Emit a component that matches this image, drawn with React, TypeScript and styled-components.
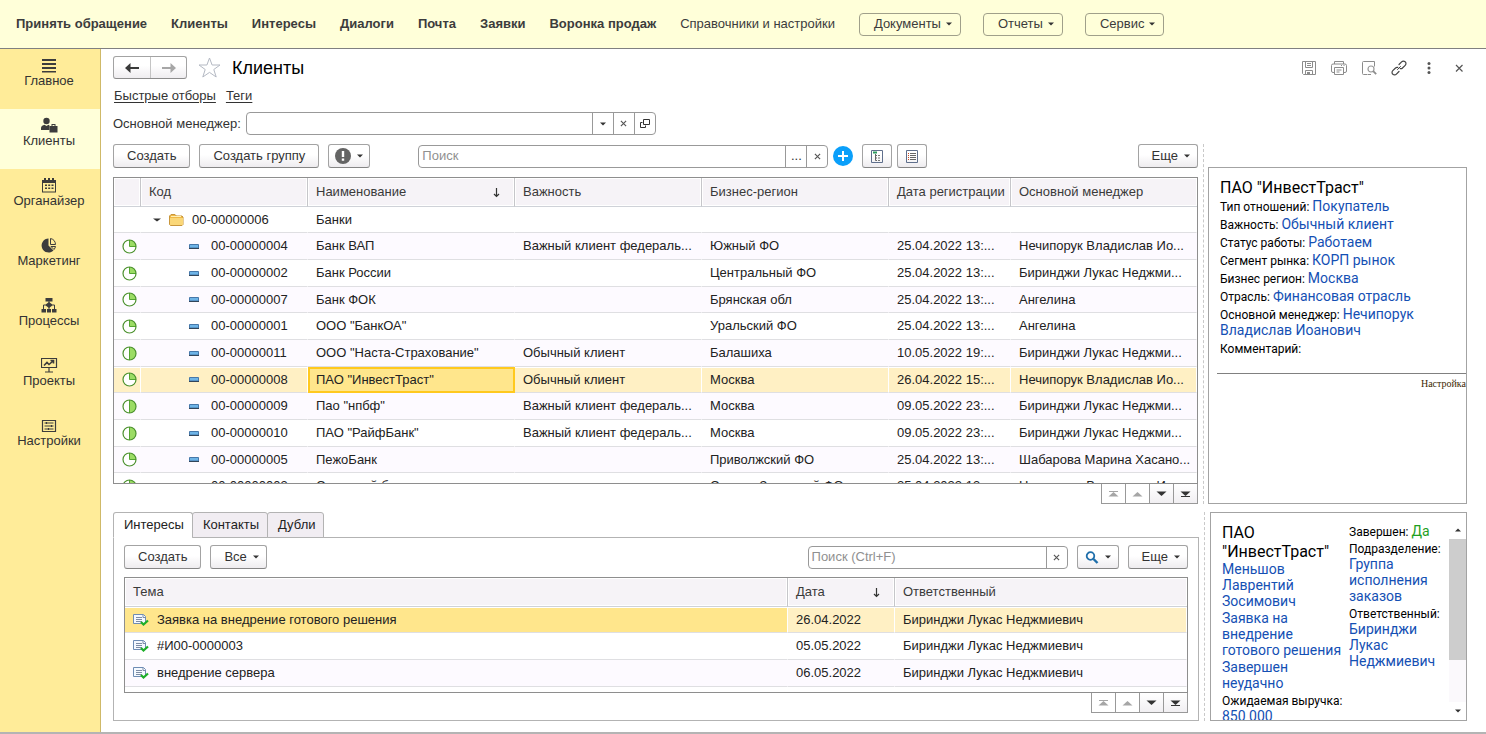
import React from 'react';
import styled, { createGlobalStyle, css } from 'styled-components';

const GlobalStyle = createGlobalStyle`
  * { box-sizing: border-box; }
  body {
    margin: 0;
    background: #fff;
    color: #333;
    font: 13px/16px "Liberation Sans", Arial, sans-serif;
  }
  button, input { font: inherit; color: inherit; }
  button { cursor: pointer; }
  svg { display: block; flex: none; }
`;

const line = '#a3a3a3';

/* ---------- shell ---------- */

const Shell = styled.div`
  display: flex;
  flex-direction: column;
  height: 100vh;
  min-height: 640px;
`;

const TopBar = styled.nav`
  display: flex;
  align-items: center;
  gap: 24px;
  height: 49px;
  padding: 0 16px;
  background: #ffffd9;
  border-bottom: 1px solid #808080;
  white-space: nowrap;
  flex: none;
`;

const TopLink = styled.a<{ $strong?: boolean }>`
  color: #3c3c3c;
  text-decoration: none;
  font-weight: ${(p) => (p.$strong ? 700 : 400)};
`;

const TopMenus = styled.div`
  display: flex;
  gap: 22px;
`;

const TopMenu = styled.button`
  display: flex;
  align-items: center;
  gap: 5px;
  height: 23px;
  padding: 0 8px 0 14px;
  border: 1px solid #a0a08a;
  border-radius: 4px;
  background: transparent;
  color: #3c3c3c;
`;

const Body = styled.div`
  display: flex;
  flex: 1;
  min-height: 0;
`;

const Sidebar = styled.nav`
  flex: none;
  width: 101px;
  background: #ffec99;
  border-right: 1px solid #cfb968;
`;

const SideItem = styled.a<{ $active?: boolean }>`
  display: flex;
  flex-direction: column;
  align-items: center;
  height: 60px;
  padding: 8px 2px 0 0;
  color: #333;
  text-decoration: none;
  background: ${(p) => (p.$active ? '#ffffd9' : 'transparent')};
`;

const Main = styled.main`
  display: flex;
  flex-direction: column;
  flex: 1;
  min-width: 0;
  padding: 7px 19px 11px 12px;
`;

const StatusLine = styled.div`
  flex: none;
  height: 2px;
  background: #b4b4b4;
`;

/* ---------- title rows ---------- */

const TitleRow = styled.header`
  display: flex;
  align-items: center;
  height: 23px;
  gap: 11px;
`;

const NavPair = styled.div`
  display: flex;
  height: 23px;
  border: 1px solid ${line};
  border-bottom-color: #8c8c8c;
  border-radius: 3px;
  background: linear-gradient(#fff 40%, #efedf0);
`;

const NavButton = styled.button`
  display: grid;
  place-items: center;
  width: 36px;
  padding: 0;
  border: 0;
  background: none;
  & + & { border-left: 1px solid #c4c4c4; }
`;

const IconButton = styled.button`
  display: grid;
  place-items: center;
  padding: 0;
  border: 0;
  background: none;
`;

const Title = styled.h1`
  margin: 0;
  color: #000;
  font-size: 18px;
  line-height: 22px;
  font-weight: 400;
`;

const TitleTools = styled.div`
  display: flex;
  gap: 14px;
  margin-left: auto;
`;

const QuickLinks = styled.div`
  display: flex;
  gap: 10px;
  padding: 0 1px;
  margin-top: 9px;
`;

const QuickLink = styled.a`
  color: #333;
  text-underline-offset: 2px;
`;

const FilterRow = styled.div`
  display: flex;
  align-items: center;
  gap: 5px;
  margin-top: 8px;
`;

/* ---------- controls ---------- */

const Field = styled.div<{ $width: number }>`
  display: flex;
  flex: none;
  width: ${(p) => p.$width}px;
  height: 23px;
  border: 1px solid #999;
  border-radius: 4px;
  background: #fff;
  overflow: hidden;
`;

const FieldInput = styled.input`
  flex: 1;
  min-width: 0;
  padding: 0 3px;
  border: 0;
  outline: 0;
  background: none;
  &::placeholder { color: #909090; opacity: 1; }
`;

const FieldButton = styled.button`
  display: grid;
  place-items: center;
  width: 21px;
  padding: 0;
  border: 0;
  border-left: 1px solid #999;
  background: none;
`;

const Toolbar = styled.div`
  display: flex;
  align-items: center;
  gap: 9px;
  height: 24px;
`;

const Group = styled.div`
  display: flex;
  align-items: center;
  gap: 5px;
`;

const Spacer = styled.div<{ $width?: number }>`
  ${(p) => (p.$width ? css`width: ${p.$width}px;` : css`flex: 1;`)}
`;

const Button = styled.button<{ $kind?: 'menu' | 'icon' | 'iconMenu' }>`
  display: flex;
  align-items: center;
  justify-content: center;
  gap: 6px;
  height: 24px;
  padding: ${(p) => (p.$kind === 'menu' ? '0 7px 0 13px' : p.$kind ? '0' : '0 13px')};
  ${(p) => p.$kind === 'icon' && css`width: 30px;`}
  ${(p) => p.$kind === 'iconMenu' && css`width: 42px;`}
  border: 1px solid ${line};
  border-bottom-color: #858585;
  border-radius: 3px;
  background: linear-gradient(#fff 45%, #eeecef);
  white-space: nowrap;
`;

/* ---------- tables ---------- */

const TopArea = styled.section`
  display: grid;
  grid-template-columns: minmax(0, 1fr) 10px 259px;
  flex: 1;
  min-height: 0;
  margin-top: 9px;
`;

const BottomArea = styled.section`
  display: grid;
  grid-template-columns: minmax(0, 1fr) 11px 257px;
  height: 209px;
  margin-top: 8px;
  flex: none;
`;

const Splitter = styled.div`
  justify-self: center;
  border-left: 1px dashed #c9c9c9;
`;

const ListColumn = styled.div`
  display: flex;
  flex-direction: column;
  min-height: 0;
`;

const TableFrame = styled.div<{ $tight?: boolean }>`
  flex: 1;
  min-height: 0;
  margin-top: ${(p) => (p.$tight ? 8 : 9)}px;
  border: 1px solid #8e8e8e;
  overflow: hidden;
`;

const Table = styled.table`
  width: 100%;
  table-layout: fixed;
  border-collapse: separate;
  border-spacing: 0;
  color: #222;
`;

const Th = styled.th`
  height: 29px;
  padding: 0 8px;
  border-right: 1px solid #c6c6ca;
  border-bottom: 1px solid #cfd2d8;
  background: #f6f3f7;
  box-shadow: inset 0 0 0 1px #fff;
  color: #3a3a3a;
  font-weight: 400;
  text-align: left;
  white-space: nowrap;
  &:last-child { border-right: 0; }
`;

const Sorted = styled.span`
  display: flex;
  align-items: center;
  justify-content: space-between;
  padding-right: 5px;
`;

const Tr = styled.tr<{ $selected?: boolean; $tinted?: boolean }>`
  height: 27px;
  background: ${(p) => (p.$selected ? '#fff0c4' : p.$tinted ? '#fdfaff' : '#fff')};
  &:nth-child(3n + 1) { height: 26px; }
  ${(p) =>
    p.$selected &&
    css`
      && > td { border-right: 1px solid #fff; box-shadow: inset 0 1px #fff; }
    `}
`;

const Td = styled.td<{ $current?: boolean; $fill?: boolean }>`
  padding: 0 8px;
  border-right: 1px solid transparent;
  border-bottom: 1px solid #dfdfe2;
  white-space: nowrap;
  overflow: hidden;
  ${(p) =>
    p.$current &&
    css`
      background: #ffe68c;
      outline: 2px solid #ffc91f;
      outline-offset: -2px;
    `}
  ${(p) => p.$fill && css`background: #ffe68c;`}
`;

const Inline = styled.span<{ $indent?: number; $gap: number }>`
  display: flex;
  align-items: center;
  gap: ${(p) => p.$gap}px;
  padding-left: ${(p) => p.$indent ?? 0}px;
`;

const Pager = styled.div`
  display: flex;
  flex: none;
  align-self: flex-end;
  border: 1px solid #999;
  border-top: 0;
`;

const PagerButton = styled.button`
  display: grid;
  place-items: center;
  width: 24px;
  height: 19px;
  padding: 0;
  border: 0;
  background: #fff;
  color: #333;
  & + & { border-left: 1px solid #999; }
  &:disabled { color: #a6a6a6; }
  &:not(:disabled) { background: linear-gradient(#fff, #f1eff2); }
  &:first-child { width: 23px; }
`;

/* ---------- tabs ---------- */

const Tabs = styled.div`
  display: flex;
  flex: none;
  height: 26px;
  margin-bottom: -1px;
  z-index: 1;
`;

const Tab = styled.button<{ $active?: boolean }>`
  padding: 0 8px 0 10px;
  border: 1px solid #b3b3b3;
  border-bottom-color: ${(p) => (p.$active ? '#fff' : '#b3b3b3')};
  border-radius: 3px 3px 0 0;
  background: ${(p) => (p.$active ? '#fff' : '#f1edf2')};
  color: #222;
  & + & { margin-left: -1px; }
`;

const TabPanel = styled.div`
  display: flex;
  flex-direction: column;
  flex: 1;
  min-height: 0;
  padding: 7px 10px;
  border: 1px solid #b3b3b3;
`;

/* ---------- info cards ---------- */

const Line = styled.p`
  margin: 2px 0 0;
`;

const Card = styled.aside<{ $lowered?: boolean }>`
  display: flex;
  margin-top: ${(p) => (p.$lowered ? 23 : 0)}px;
  border: 1px solid ${line};
  overflow: hidden;
  color: #000;
  font: 12px/16px Roboto, sans-serif;
`;

const CardMain = styled.div`
  flex: 1;
  min-width: 0;
  padding: 10px 0 0 8px;
`;

const CardText = styled.div`
  padding: 0 40px 16px 3px;
`;

const CardTitle = styled.h2`
  margin: 0;
  font-size: 16px;
  line-height: 19px;
  font-weight: 400;
`;

const Value = styled.a<{ $good?: boolean }>`
  color: ${(p) => (p.$good ? '#1ea01e' : '#1450b4')};
  font-size: 14px;
  line-height: 14px;
  text-decoration: none;
`;

const CardFooter = styled.div`
  padding-top: 4px;
  border-top: 1px solid #808080;
  text-align: right;
  font: 10px/12px "Liberation Serif", serif;
`;

const FooterLink = styled.a`
  color: #3c2800;
  text-decoration: none;
`;

const CardColumns = styled.div`
  display: grid;
  grid-template-columns: 127px minmax(0, 1fr);
  flex: 1;
  padding: 10px 0 0 11px;
  ${Line} { margin-top: 1px; }
`;

const Scrollbar = styled.div`
  display: flex;
  flex-direction: column;
  width: 17px;
  padding-top: 8px;
`;

const ScrollArrow = styled.button`
  display: grid;
  place-items: center;
  height: 18px;
  padding: 0;
  border: 0;
  background: none;
`;

const ScrollTrack = styled.div`
  flex: 1;
  background: #fbf9fc;
`;

const ScrollThumb = styled.div`
  height: 74%;
  background: #cdcdcd;
`;

/* ---------- icons ---------- */

const Caret = ({ up, wide }: { up?: boolean; wide?: boolean }) => (
  <svg width={wide ? 8 : 6} height="4" viewBox="0 0 6 4" preserveAspectRatio="none">
    <path d={up ? 'M0 3.5 3 .5l3 3z' : 'M0 .5h6l-3 3z'} fill="#333" />
  </svg>
);

const Cross = () => (
  <svg width="7" height="7" viewBox="0 0 8 8">
    <path d="M1 1l6 6M7 1 1 7" stroke="#555" strokeWidth="1.3" />
  </svg>
);

const SortArrow = () => (
  <svg width="9" height="11" viewBox="0 0 9 11">
    <path d="M4.500 1v8.500M2 7l2.500 2.500L7 7" stroke="#333" strokeWidth="1.2" fill="none" />
  </svg>
);

const Arrow = ({ right }: { right?: boolean }) => (
  <svg width="14" height="10" viewBox="0 0 14 10" fill={right ? '#a6a6a6' : '#3a3a3a'}>
    <path d={right ? 'M0 4h8.500V0L14 5l-5.500 5V6H0z' : 'M14 4H5.500V0L0 5l5.500 5V6H14z'} />
  </svg>
);

const Star = () => (
  <svg width="23" height="21" viewBox="0 0 23 21">
    <path d="M11.500 1l2.600 7H22l-6.200 4.500L18.200 20l-6.700-4.600L4.800 20l2.400-7.500L1 8h7.900z" fill="#fff" stroke="#b4b9c3" />
  </svg>
);

const stroke = (color: string) => ({ fill: 'none', stroke: color, strokeWidth: 1 });

const SaveIcon = () => (
  <svg width="16" height="16" viewBox="0 0 16 16" {...stroke('#8c8c8c')}>
    <path d="M1.500 1.500h13v13h-12l-1-1zM4.500 1.500v6h7v-6M6 3.500h4M6 5.500h4M4.500 14.500v-4h7v4" />
    <path d="M6 12h3v2.500H6z" fill="#8c8c8c" stroke="none" />
  </svg>
);

const PrintIcon = () => (
  <svg width="16" height="16" viewBox="0 0 16 16" {...stroke('#8c8c8c')}>
    <path d="M3.500 4V1.500h9V4M3.500 12.500H2a1.500 1.500 0 0 1-1.500-1.500V5.500A1.500 1.500 0 0 1 2 4h12a1.500 1.500 0 0 1 1.500 1.500V11a1.500 1.500 0 0 1-1.500 1.500h-1.500M3.500 7.500h9v7h-9zM5.500 10h5M5.500 12h3M10 5.500h1M12.500 5.500h1" />
  </svg>
);

const PreviewIcon = () => (
  <svg width="16" height="16" viewBox="0 0 16 16" {...stroke('#8c8c8c')}>
    <path d="M6.500 14.500h-4a1 1 0 0 1-1-1v-11a1 1 0 0 1 1-1h11v5M7 14.500h3" />
    <circle cx="10" cy="9" r="3" stroke="#999" strokeWidth="1.200" />
    <path d="M12.200 11.200l3 3" strokeWidth="1.800" />
  </svg>
);

const LinkIcon = () => (
  <svg width="16" height="16" viewBox="0 0 16 16" fill="none" stroke="#444" strokeWidth="1.200" strokeLinecap="round">
    <path d="M8 4.500l2.600-2.700a2.500 2.500 0 0 1 3.600 0 2.500 2.500 0 0 1 0 3.600L11.500 8a2.300 2.300 0 0 1-2.300.6" />
    <path d="M8 11.500l-2.600 2.700a2.500 2.500 0 0 1-3.600 0 2.500 2.500 0 0 1 0-3.600L4.500 8a2.300 2.300 0 0 1 2.300-.6" />
    <path d="M6.500 9.500l3-3" strokeWidth="1" />
  </svg>
);

const DotsIcon = () => (
  <svg width="16" height="16" viewBox="0 0 16 16" fill="#555">
    <circle cx="8" cy="3.500" r="1.500" />
    <circle cx="8" cy="8" r="1.500" />
    <circle cx="8" cy="12.500" r="1.500" />
  </svg>
);

const CloseIcon = () => (
  <svg width="16" height="16" viewBox="0 0 16 16">
    <path d="M5 5l6.500 6.500M11.500 5L5 11.500" stroke="#555" strokeWidth="1.200" />
  </svg>
);

const OpenIcon = () => (
  <svg width="10" height="9" viewBox="0 0 10 9" {...stroke('#333')}>
    <path d="M3.500.5h6v5h-6zM2.500 3.500h-2v5h5v-2" />
  </svg>
);

const AlertIcon = () => (
  <svg width="16" height="16" viewBox="0 0 16 16">
    <circle cx="8" cy="8" r="8" fill="#646464" />
    <path d="M6.800 3h2.400v6H6.800zM6.800 10.500h2.400v2.200H6.800z" fill="#fff" />
  </svg>
);

const PlusIcon = () => (
  <svg width="20" height="20" viewBox="0 0 20 20">
    <circle cx="10" cy="10" r="10" fill="#0a9ffa" />
    <path d="M10 5v10M5 10h10" stroke="#fff" strokeWidth="2" />
  </svg>
);

const TreeViewIcon = () => (
  <svg width="12" height="13" viewBox="0 0 12 13" {...stroke('#5f6f8c')}>
    <path d="M.5.500h11v12H.5z" />
    <path d="M2 2.500h4" stroke="#2d9b5f" strokeWidth="2" />
    <path d="M4.500 4v6.500H6M4.500 5.500H6M4.500 8H6" stroke="#666" />
    <path d="M7 5.500h3M7 8h3M7 10.500h3" stroke="#777" strokeDasharray="2 1" />
  </svg>
);

const ListViewIcon = () => (
  <svg width="12" height="13" viewBox="0 0 12 13" {...stroke('#5f6f8c')}>
    <path d="M.5.500h11v12H.5z" />
    <path d="M2 3.500h1M2 5.500h1M2 7.500h1M2 9.500h1" stroke="#c8461e" />
    <path d="M4 3.500h6M4 5.500h6M4 7.500h6M4 9.500h6" stroke="#666" />
  </svg>
);

const SearchIcon = () => (
  <svg width="14" height="13" viewBox="0 0 14 13" fill="none" stroke="#1e6eaa">
    <circle cx="5.500" cy="5" r="3.800" strokeWidth="1.800" />
    <path d="M8.500 8l4 4" strokeWidth="2.400" />
  </svg>
);

const Pie = ({ half }: { half?: boolean }) => (
  <svg width="15" height="15" viewBox="0 0 15 15">
    <circle cx="7.500" cy="7.500" r="6.500" fill="#fff" />
    <path d={half ? 'M7.500 1a6.500 6.500 0 0 1 0 13z' : 'M7.500 1A6.500 6.500 0 0 1 14 7.500H7.500z'} fill="#9bdc64" />
    <path d={half ? 'M7.500 1v13' : 'M7.500 1v6.500H14'} stroke="#55a532" fill="none" />
    <circle cx="7.500" cy="7.500" r="6.500" fill="none" stroke="#4b912d" strokeWidth="1.200" />
  </svg>
);

const Dash = () => (
  <svg width="10" height="5" viewBox="0 0 10 5">
    <path d="M.5.500h9v3.500h-9z" fill="#6eb4e6" stroke="#4678aa" />
    <path d="M0 4.500h10" stroke="#32465a" />
  </svg>
);

const Folder = () => (
  <svg width="15" height="12" viewBox="0 0 15 12">
    <path d="M.5 10.500V2L2 .5h4L7.500 2H13l1 1v7.500l-1 1H1.500z" fill="#f0b946" stroke="#c8963c" />
    <path d="M1 4h13v6.500l-.5.500h-12L1 10.500z" fill="#fad778" />
    <path d="M2 2.500h10" stroke="#fff0b4" />
  </svg>
);

const DocIcon = () => (
  <svg width="16" height="12" viewBox="0 0 16 12">
    <path d="M.5.500h10l2 2V9.500H.5z" fill="#f5f9ff" stroke="#6e8cb4" />
    <path d="M3 3.500h6M3 5.500h6M3 7.500h6M10 1v2.500h2.500" stroke="#7d8ca5" fill="none" />
    <path d="M8 8l2.500 2.500L15 6.500" stroke="#1eaf28" strokeWidth="2.200" fill="none" />
  </svg>
);

const PageMark = ({ up, end }: { up?: boolean; end?: boolean }) => (
  <svg width="11" height="8" viewBox="0 0 11 8" fill="currentColor">
    <path d={up ? 'M.5 6.500 5.500 2l5 4.500z' : 'M.5 1.500h10L5.500 6z'} />
    {end && <path d={up ? 'M1 1h9v1H1z' : 'M1 6h9v1H1z'} />}
  </svg>
);

const dark = '#3c3c3c';
const sideIcons: Record<string, React.ReactNode> = {
  main: <path d="M1 2h14v2H1zM1 6h14v2H1zM1 10h14v2H1zM1 14h14v1.500H1z" />,
  clients: (
    <>
      <circle cx="5.500" cy="4" r="3.200" />
      <path d="M0 13V11c0-2 2-2.500 3.500-3.200L5.500 9l2-1.200 1 .6V13z" />
      <path d="M8.500 9h8v6.500h-8zM10.500 9V7h4v2h-1V8h-2v1z" />
    </>
  ),
  calendar: (
    <>
      <path d="M1 3h14v12.500H1zM2 6v8.500h12V6z" fillRule="evenodd" />
      <path d="M3 1h2v3H3zM7 1h2v3H7zM11 1h2v3h-2zM4 7.500h2v1.500H4zM7.200 7.500h2v1.500h-2zM10.500 7.500h2v1.500h-2zM4 10.500h2V12H4zM7.200 10.500h2V12h-2zM10.500 10.500h2V12h-2z" />
    </>
  ),
  pie: (
    <>
      <path d="M7.500 1.500v7l5 5A7 7 0 1 1 7.500 1.500z" />
      <path d="M9.500 7.500v-6a6.500 6.500 0 0 1 5 6zM10 9.500h4.500a7 7 0 0 1-1.500 3z" fill="none" stroke={dark} />
    </>
  ),
  flow: (
    <>
      <path d="M4.500 1h7v3.500h-7zM8 5l4 3-4 3-4-3zM.5 12h4.500v3.500H.5zM6 12h4v3.500H6zM11 12h4.500v3.500H11z" />
      <path d="M8 4v8M4.500 8H2.500v4M11.500 8h2v4" fill="none" stroke={dark} />
    </>
  ),
  board: (
    <>
      <path d="M.5 1.500h15v9H.5zM8 10.500V15M4 15h8" fill="none" stroke={dark} strokeWidth="1.200" />
      <path d="M3 8.500l3-3 2 2L12 4M9.500 3.500h3v3" fill="none" stroke={dark} strokeWidth="1.600" />
    </>
  ),
  settings: (
    <path
      d="M1.500 3.500h13v11h-13zM3.500 6h9M3.500 9h9M3.500 12h9M5.500 5v2M10.500 8v2M7.500 11v2"
      fill="none"
      stroke={dark}
      strokeWidth="1.200"
    />
  ),
};

/* ---------- data ---------- */

const topLinks = ['Принять обращение', 'Клиенты', 'Интересы', 'Диалоги', 'Почта', 'Заявки', 'Воронка продаж'];
const topMenus = ['Документы', 'Отчеты', 'Сервис'];

const sideItems = [
  ['main', 'Главное'],
  ['clients', 'Клиенты'],
  ['calendar', 'Органайзер'],
  ['pie', 'Маркетинг'],
  ['flow', 'Процессы'],
  ['board', 'Проекты'],
  ['settings', 'Настройки'],
];

const federal = 'Важный клиент федераль...';
const regular = 'Обычный клиент';
const nechiporuk = 'Нечипорук Владислав Ио...';
const birindzhi = 'Биринджи Лукас Неджми...';

type Client = { code: string; name: string; level?: string; region: string; date: string; manager: string; half?: boolean };

const clients: Client[] = [
  { code: '00-00000004', name: 'Банк ВАП', level: federal, region: 'Южный ФО', date: '25.04.2022 13:...', manager: nechiporuk },
  { code: '00-00000002', name: 'Банк России', region: 'Центральный ФО', date: '25.04.2022 13:...', manager: birindzhi },
  { code: '00-00000007', name: 'Банк ФОК', region: 'Брянская обл', date: '25.04.2022 13:...', manager: 'Ангелина' },
  { code: '00-00000001', name: 'ООО "БанкОА"', region: 'Уральский ФО', date: '25.04.2022 13:...', manager: 'Ангелина' },
  { code: '00-00000011', name: 'ООО "Наста-Страхование"', level: regular, region: 'Балашиха', date: '10.05.2022 19:...', manager: birindzhi, half: true },
  { code: '00-00000008', name: 'ПАО "ИнвестТраст"', level: regular, region: 'Москва', date: '26.04.2022 15:...', manager: nechiporuk },
  { code: '00-00000009', name: 'Пао "нпбф"', level: federal, region: 'Москва', date: '09.05.2022 23:...', manager: birindzhi, half: true },
  { code: '00-00000010', name: 'ПАО "РайфБанк"', level: federal, region: 'Москва', date: '09.05.2022 23:...', manager: birindzhi, half: true },
  { code: '00-00000005', name: 'ПежоБанк', region: 'Приволжский ФО', date: '25.04.2022 13:...', manager: 'Шабарова Марина Хасано...' },
  { code: '00-00000003', name: 'Северный банк', region: 'Северо-Западный ФО', date: '25.04.2022 13:...', manager: nechiporuk, half: true },
];

const interests = [
  ['Заявка на внедрение готового решения', '26.04.2022'],
  ['#И00-0000003', '05.05.2022'],
  ['внедрение сервера', '06.05.2022'],
];

const facts = [
  ['Тип отношений:', 'Покупатель'],
  ['Важность:', 'Обычный клиент'],
  ['Статус работы:', 'Работаем'],
  ['Сегмент рынка:', 'КОРП рынок'],
  ['Бизнес регион:', 'Москва'],
  ['Отрасль:', 'Финансовая отрасль'],
  ['Основной менеджер:', 'Нечипорук Владислав Иоанович'],
];

const PageControls = () => (
  <Pager>
    <PagerButton disabled aria-label="В начало"><PageMark up end /></PagerButton>
    <PagerButton disabled aria-label="Вверх"><PageMark up /></PagerButton>
    <PagerButton aria-label="Вниз"><PageMark /></PagerButton>
    <PagerButton aria-label="В конец"><PageMark end /></PagerButton>
  </Pager>
);

export default function App() {
  return (
    <>
      <GlobalStyle />
      <Shell>
        <TopBar>
          {topLinks.map((t) => <TopLink key={t} href="#" $strong>{t}</TopLink>)}
          <TopLink href="#">Справочники и настройки</TopLink>
          <TopMenus>
            {topMenus.map((t) => <TopMenu key={t}>{t}<Caret /></TopMenu>)}
          </TopMenus>
        </TopBar>
        <Body>
          <Sidebar>
            {sideItems.map(([icon, label]) => (
              <SideItem key={icon} href="#" $active={icon === 'clients'}>
                <svg width="17" height="16" viewBox="0 0 17 16" fill={dark}>{sideIcons[icon]}</svg>
                {label}
              </SideItem>
            ))}
          </Sidebar>
          <Main>
            <TitleRow>
              <NavPair>
                <NavButton aria-label="Назад"><Arrow /></NavButton>
                <NavButton aria-label="Вперед"><Arrow right /></NavButton>
              </NavPair>
              <IconButton aria-label="В избранное"><Star /></IconButton>
              <Title>Клиенты</Title>
              <TitleTools>
                <IconButton aria-label="Сохранить"><SaveIcon /></IconButton>
                <IconButton aria-label="Печать"><PrintIcon /></IconButton>
                <IconButton aria-label="Просмотр"><PreviewIcon /></IconButton>
                <IconButton aria-label="Ссылка"><LinkIcon /></IconButton>
                <IconButton aria-label="Меню"><DotsIcon /></IconButton>
                <IconButton aria-label="Закрыть"><CloseIcon /></IconButton>
              </TitleTools>
            </TitleRow>
            <QuickLinks>
              <QuickLink href="#">Быстрые отборы</QuickLink>
              <QuickLink href="#">Теги</QuickLink>
            </QuickLinks>
            <FilterRow>
              <label htmlFor="manager">Основной менеджер:</label>
              <Field $width={410}>
                <FieldInput id="manager" />
                <FieldButton aria-label="Выбрать"><Caret /></FieldButton>
                <FieldButton aria-label="Очистить"><Cross /></FieldButton>
                <FieldButton aria-label="Открыть"><OpenIcon /></FieldButton>
              </Field>
            </FilterRow>

            <TopArea>
              <ListColumn>
                <Toolbar>
                  <Button>Создать</Button>
                  <Button>Создать группу</Button>
                  <Button $kind="iconMenu" aria-label="Важность"><AlertIcon /><Caret /></Button>
                  <Spacer $width={30} />
                  <Group>
                    <Field $width={410}>
                      <FieldInput placeholder="Поиск" aria-label="Поиск" />
                      <FieldButton>...</FieldButton>
                      <FieldButton aria-label="Очистить"><Cross /></FieldButton>
                    </Field>
                    <IconButton aria-label="Добавить"><PlusIcon /></IconButton>
                  </Group>
                  <Group>
                    <Button $kind="icon" aria-label="Дерево"><TreeViewIcon /></Button>
                    <Button $kind="icon" aria-label="Список"><ListViewIcon /></Button>
                  </Group>
                  <Spacer />
                  <Button $kind="menu">Еще<Caret /></Button>
                </Toolbar>
                <TableFrame>
                  <Table>
                    <colgroup>
                      <col width="27" /><col width="167" /><col width="207" /><col width="187" />
                      <col width="187" /><col width="122" /><col />
                    </colgroup>
                    <thead>
                      <tr>
                        <Th />
                        <Th>Код</Th>
                        <Th><Sorted>Наименование<SortArrow /></Sorted></Th>
                        <Th>Важность</Th>
                        <Th>Бизнес-регион</Th>
                        <Th>Дата регистрации</Th>
                        <Th>Основной менеджер</Th>
                      </tr>
                    </thead>
                    <tbody>
                      <Tr>
                        <Td />
                        <Td><Inline $gap={8} $indent={4}><Caret wide /><Folder />00-00000006</Inline></Td>
                        <Td>Банки</Td><Td /><Td /><Td /><Td />
                      </Tr>
                      {clients.map((c, i) => {
                        const selected = c.code === '00-00000008';
                        return (
                          <Tr key={c.code} $selected={selected} $tinted={i % 2 === 0}>
                            <Td><Pie half={c.half} /></Td>
                            <Td><Inline $gap={12} $indent={40}><Dash />{c.code}</Inline></Td>
                            <Td $current={selected}>{c.name}</Td>
                            <Td>{c.level}</Td>
                            <Td>{c.region}</Td>
                            <Td>{c.date}</Td>
                            <Td>{c.manager}</Td>
                          </Tr>
                        );
                      })}
                    </tbody>
                  </Table>
                </TableFrame>
                <PageControls />
              </ListColumn>
              <Splitter />
              <Card $lowered>
                <CardMain>
                  <CardText>
                    <CardTitle>ПАО "ИнвестТраст"</CardTitle>
                    {facts.map(([label, value]) => (
                      <Line key={label}>{label} <Value href="#">{value}</Value></Line>
                    ))}
                    <Line>Комментарий:</Line>
                  </CardText>
                  <CardFooter><FooterLink href="#">Настройка</FooterLink></CardFooter>
                </CardMain>
              </Card>
            </TopArea>

            <BottomArea>
              <ListColumn>
                <Tabs role="tablist">
                  <Tab role="tab" aria-selected $active>Интересы</Tab>
                  <Tab role="tab">Контакты</Tab>
                  <Tab role="tab">Дубли</Tab>
                </Tabs>
                <TabPanel role="tabpanel">
                  <Toolbar>
                    <Button>Создать</Button>
                    <Button $kind="menu">Все<Caret /></Button>
                    <Spacer />
                    <Field $width={260}>
                      <FieldInput placeholder="Поиск (Ctrl+F)" aria-label="Поиск интересов" />
                      <FieldButton aria-label="Очистить"><Cross /></FieldButton>
                    </Field>
                    <Button $kind="iconMenu" aria-label="Найти"><SearchIcon /><Caret /></Button>
                    <Button $kind="menu">Еще<Caret /></Button>
                  </Toolbar>
                  <TableFrame $tight>
                    <Table>
                      <colgroup><col /><col width="107" /><col width="292" /></colgroup>
                      <thead>
                        <tr>
                          <Th>Тема</Th>
                          <Th><Sorted>Дата<SortArrow /></Sorted></Th>
                          <Th>Ответственный</Th>
                        </tr>
                      </thead>
                      <tbody>
                        {interests.map(([topic, date], i) => (
                          <Tr key={topic} $selected={i === 0} $tinted={i === 2}>
                            <Td $fill={i === 0}><Inline $gap={8}><DocIcon />{topic}</Inline></Td>
                            <Td>{date}</Td>
                            <Td>Биринджи Лукас Неджмиевич</Td>
                          </Tr>
                        ))}
                      </tbody>
                    </Table>
                  </TableFrame>
                  <PageControls />
                </TabPanel>
              </ListColumn>
              <Splitter />
              <Card>
                <CardColumns>
                  <div>
                    <CardTitle>ПАО "ИнвестТраст"</CardTitle>
                    <Line><Value href="#">Меньшов Лаврентий Зосимович</Value></Line>
                    <Line><Value href="#">Заявка на внедрение готового решения</Value></Line>
                    <Line><Value href="#">Завершен неудачно</Value></Line>
                    <Line>Ожидаемая выручка: <Value href="#">850 000</Value></Line>
                  </div>
                  <div>
                    <Line>Завершен: <Value href="#" $good>Да</Value></Line>
                    <Line>Подразделение: <Value href="#">Группа исполнения заказов</Value></Line>
                    <Line>Ответственный: <Value href="#">Биринджи Лукас Неджмиевич</Value></Line>
                  </div>
                </CardColumns>
                <Scrollbar>
                  <ScrollArrow aria-label="Прокрутить вверх"><Caret up /></ScrollArrow>
                  <ScrollTrack><ScrollThumb /></ScrollTrack>
                  <ScrollArrow aria-label="Прокрутить вниз"><Caret /></ScrollArrow>
                </Scrollbar>
              </Card>
            </BottomArea>
          </Main>
        </Body>
        <StatusLine />
      </Shell>
    </>
  );
}
